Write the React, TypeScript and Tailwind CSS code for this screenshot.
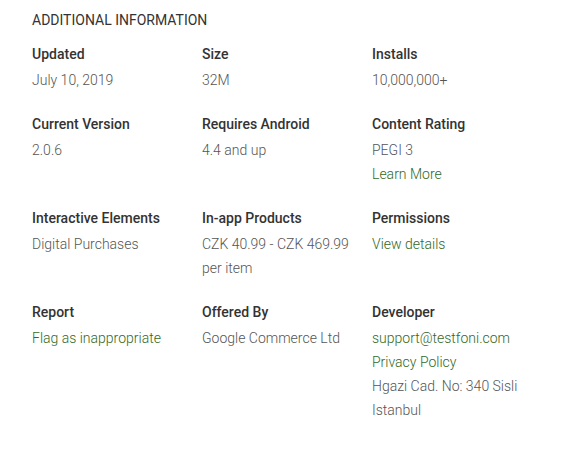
const LINK = "text-[#33691e]";

type Line = { text: string; link?: boolean };
type Item = { label: string; values: Line[] };

const rows: Item[][] = [
  [
    { label: "Updated", values: [{ text: "July 10, 2019" }] },
    { label: "Size", values: [{ text: "32M" }] },
    { label: "Installs", values: [{ text: "10,000,000+" }] },
  ],
  [
    { label: "Current Version", values: [{ text: "2.0.6" }] },
    { label: "Requires Android", values: [{ text: "4.4 and up" }] },
    {
      label: "Content Rating",
      values: [{ text: "PEGI 3" }, { text: "Learn More", link: true }],
    },
  ],
  [
    { label: "Interactive Elements", values: [{ text: "Digital Purchases" }] },
    {
      label: "In-app Products",
      values: [{ text: "CZK 40.99 - CZK 469.99 per item" }],
    },
    { label: "Permissions", values: [{ text: "View details", link: true }] },
  ],
  [
    { label: "Report", values: [{ text: "Flag as inappropriate", link: true }] },
    { label: "Offered By", values: [{ text: "Google Commerce Ltd" }] },
    {
      label: "Developer",
      values: [
        { text: "support@testfoni.com", link: true },
        { text: "Privacy Policy", link: true },
        { text: "Hgazi Cad. No: 340 Sisli Istanbul" },
      ],
    },
  ],
];

const InfoCell = ({ item }: { item: Item }) => (
  <div className="w-[170px] pr-5">
    <div className="text-sm leading-6 font-medium text-[#333333] mb-[2px]">
      {item.label}
    </div>
    {item.values.map((v) => (
      <div
        key={v.text}
        className={`text-sm leading-6 font-light ${v.link ? LINK : "text-[#555555]"}`}
      >
        {v.text}
      </div>
    ))}
  </div>
);

export default function App() {
  return (
    <div
      className="w-[582px] h-[455px] bg-white px-8 pt-2"
      style={{ fontFamily: "Roboto, 'Liberation Sans', sans-serif" }}
    >
      <h2 className="text-sm leading-6 font-normal uppercase text-[#333333] mb-[10px]">
        Additional Information
      </h2>
      <div className="flex flex-col gap-5">
        {rows.map((row, i) => (
          <div key={i} className="flex">
            {row.map((item) => (
              <InfoCell key={item.label} item={item} />
            ))}
          </div>
        ))}
      </div>
    </div>
  );
}
